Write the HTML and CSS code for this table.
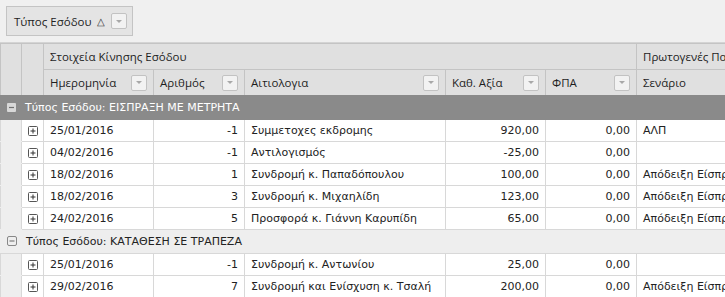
FILE: index.html
```html
<!DOCTYPE html>
<html>
<head>
<meta charset="utf-8">
<link rel="stylesheet" href="styles.css">
</head>
<body>
<div class="grouppanel">
  <div class="groupbtn"><span>Τύπος Εσόδου</span><span class="sort">&#9651;</span><span class="fbtn"><svg width="8" height="5" viewBox="0 0 8 5"><path d="M1 1h6L4 4z" fill="#a8a8a8"/></svg></span></div>
</div>
<table class="grid">
  <colgroup>
    <col class="c-ind"><col class="c-exp"><col class="c-date"><col class="c-num"><col class="c-desc"><col class="c-val"><col class="c-vat"><col class="c-scn">
  </colgroup>
  <thead>
    <tr class="band">
      <th class="ind" rowspan="2"></th>
      <th class="exp" rowspan="2"></th>
      <th colspan="5">Στοιχεία Κίνησης Εσόδου</th>
      <th>Πρωτογενές Παραστατικό</th>
    </tr>
    <tr class="cols">
      <th><div class="hc"><span>Ημερομηνία</span><span class="fbtn"><svg width="8" height="5" viewBox="0 0 8 5"><path d="M1 1h6L4 4z" fill="#a8a8a8"/></svg></span></div></th>
      <th><div class="hc"><span>Αριθμός</span><span class="fbtn"><svg width="8" height="5" viewBox="0 0 8 5"><path d="M1 1h6L4 4z" fill="#a8a8a8"/></svg></span></div></th>
      <th><div class="hc"><span>Αιτιολογια</span><span class="fbtn"><svg width="8" height="5" viewBox="0 0 8 5"><path d="M1 1h6L4 4z" fill="#a8a8a8"/></svg></span></div></th>
      <th><div class="hc"><span>Καθ. Αξία</span><span class="fbtn"><svg width="8" height="5" viewBox="0 0 8 5"><path d="M1 1h6L4 4z" fill="#a8a8a8"/></svg></span></div></th>
      <th><div class="hc"><span>ΦΠΑ</span><span class="fbtn"><svg width="8" height="5" viewBox="0 0 8 5"><path d="M1 1h6L4 4z" fill="#a8a8a8"/></svg></span></div></th>
      <th><div class="hc"><span>Σενάριο</span></div></th>
    </tr>
  </thead>
  <tbody>
    <tr class="grp grp-sel">
      <td colspan="8"><span class="gicon"><svg width="9" height="9" viewBox="0 0 9 9"><rect x="0" y="0" width="9" height="9" rx="1" fill="#d8d8d8"/><path d="M2 4.5h5" stroke="#707070" stroke-width="1.2"/></svg></span>Τύπος Εσόδου: ΕΙΣΠΡΑΞΗ ΜΕ ΜΕΤΡΗΤΑ</td>
    </tr>
    <tr class="row"><td class="ind"></td><td class="exp"><span class="picon"><svg width="10" height="10" viewBox="0 0 10 10"><rect x="0.5" y="0.5" width="9" height="9" rx="1" fill="#fff" stroke="#555"/><path d="M2.5 5h5M5 2.5v5" stroke="#333" stroke-width="1"/></svg></span></td><td>25/01/2016</td><td class="r">-1</td><td>Συμμετοχες εκδρομης</td><td class="r">920,00</td><td class="r">0,00</td><td>ΑΛΠ</td></tr>
    <tr class="row"><td class="ind"></td><td class="exp"><span class="picon"><svg width="10" height="10" viewBox="0 0 10 10"><rect x="0.5" y="0.5" width="9" height="9" rx="1" fill="#fff" stroke="#555"/><path d="M2.5 5h5M5 2.5v5" stroke="#333" stroke-width="1"/></svg></span></td><td>04/02/2016</td><td class="r">-1</td><td>Αντιλογισμός</td><td class="r">-25,00</td><td class="r">0,00</td><td></td></tr>
    <tr class="row"><td class="ind"></td><td class="exp"><span class="picon"><svg width="10" height="10" viewBox="0 0 10 10"><rect x="0.5" y="0.5" width="9" height="9" rx="1" fill="#fff" stroke="#555"/><path d="M2.5 5h5M5 2.5v5" stroke="#333" stroke-width="1"/></svg></span></td><td>18/02/2016</td><td class="r">1</td><td>Συνδρομή κ. Παπαδόπουλου</td><td class="r">100,00</td><td class="r">0,00</td><td>Απόδειξη Είσπραξης</td></tr>
    <tr class="row"><td class="ind"></td><td class="exp"><span class="picon"><svg width="10" height="10" viewBox="0 0 10 10"><rect x="0.5" y="0.5" width="9" height="9" rx="1" fill="#fff" stroke="#555"/><path d="M2.5 5h5M5 2.5v5" stroke="#333" stroke-width="1"/></svg></span></td><td>18/02/2016</td><td class="r">3</td><td>Συνδρομή κ. Μιχαηλίδη</td><td class="r">123,00</td><td class="r">0,00</td><td>Απόδειξη Είσπραξης</td></tr>
    <tr class="row"><td class="ind"></td><td class="exp"><span class="picon"><svg width="10" height="10" viewBox="0 0 10 10"><rect x="0.5" y="0.5" width="9" height="9" rx="1" fill="#fff" stroke="#555"/><path d="M2.5 5h5M5 2.5v5" stroke="#333" stroke-width="1"/></svg></span></td><td>24/02/2016</td><td class="r">5</td><td>Προσφορά κ. Γιάννη Καρυπίδη</td><td class="r">65,00</td><td class="r">0,00</td><td>Απόδειξη Είσπραξης</td></tr>
    <tr class="grp">
      <td colspan="8"><span class="gicon"><svg width="10" height="10" viewBox="0 0 10 10"><rect x="0.5" y="0.5" width="9" height="9" rx="1.5" fill="none" stroke="#888"/><path d="M2.5 5h5" stroke="#666" stroke-width="1"/></svg></span>Τύπος Εσόδου: ΚΑΤΑΘΕΣΗ ΣΕ ΤΡΑΠΕΖΑ</td>
    </tr>
    <tr class="row"><td class="ind"></td><td class="exp"><span class="picon"><svg width="10" height="10" viewBox="0 0 10 10"><rect x="0.5" y="0.5" width="9" height="9" rx="1" fill="#fff" stroke="#555"/><path d="M2.5 5h5M5 2.5v5" stroke="#333" stroke-width="1"/></svg></span></td><td>25/01/2016</td><td class="r">-1</td><td>Συνδρομή κ. Αντωνίου</td><td class="r">25,00</td><td class="r">0,00</td><td></td></tr>
    <tr class="row"><td class="ind"></td><td class="exp"><span class="picon"><svg width="10" height="10" viewBox="0 0 10 10"><rect x="0.5" y="0.5" width="9" height="9" rx="1" fill="#fff" stroke="#555"/><path d="M2.5 5h5M5 2.5v5" stroke="#333" stroke-width="1"/></svg></span></td><td>29/02/2016</td><td class="r">7</td><td>Συνδρομή και Ενίσχυση κ. Τσαλή</td><td class="r">200,00</td><td class="r">0,00</td><td>Απόδειξη Είσπραξης</td></tr>
  </tbody>
</table>
</body>
</html>
```
FILE: styles.css
```css
html, body {
  margin: 0;
  padding: 0;
  width: 725px;
  height: 297px;
  overflow: hidden;
  background: #fff;
}
body {
  font-family: "DejaVu Sans", Verdana, sans-serif;
  color: #1e1e1e;
}
.grouppanel {
  background: #f0f0f0;
  height: 43px;
  box-sizing: border-box;
  padding: 6px 0 0 6px;
  border-bottom: 1px solid #d4d4d4;
}
.groupbtn {
  display: inline-flex;
  align-items: center;
  height: 30px;
  box-sizing: border-box;
  padding: 0 5px 0 7px;
  border: 1px solid #c4c4c4;
  background: #e4e4e4;
  font-family: "Open Sans", "Noto Sans", sans-serif;
  font-size: 11.5px;
  color: #222;
}
.groupbtn .sort {
  font-size: 10px;
  margin: 0 6px 0 6px;
  color: #333;
}
.fbtn {
  display: inline-flex;
  align-items: center;
  justify-content: center;
  width: 14px;
  height: 14px;
  border: 1px solid #c2c2c2;
  border-radius: 2px;
  background: #f2f2f2;
  flex: none;
}
.grid {
  border-collapse: collapse;
  table-layout: fixed;
  width: 830px;
}
.c-ind { width: 21px; }
.c-exp { width: 22px; }
.c-date { width: 110px; }
.c-num { width: 91px; }
.c-desc { width: 201px; }
.c-val { width: 100px; }
.c-vat { width: 91px; }
.c-scn { width: 194px; }
thead th {
  background: #e0e0e0;
  border: 1px solid #c4c4c4;
  font-family: "Open Sans", "Noto Sans", sans-serif;
  font-weight: normal;
  font-size: 11.5px;
  color: #1e1e1e;
  text-align: left;
  padding: 0 6px;
  white-space: nowrap;
  overflow: hidden;
}
thead tr.band th { height: 25px; }
thead tr.cols th { height: 25px; border-bottom: 1px solid #8a8a8a; }
thead th.ind, thead th.exp { border-bottom: 1px solid #8a8a8a; }
thead tr:first-child th { border-top: 1px solid #c4c4c4; }
.hc {
  display: flex;
  align-items: center;
  justify-content: space-between;
}
tbody td {
  height: 21px;
  padding: 0 6px;
  font-size: 11px;
  border: 1px solid #d8d8d8;
  white-space: nowrap;
  overflow: hidden;
  color: #222;
}
tbody td.r { text-align: right; padding-right: 6px; }
tbody td.ind {
  background: #eeeeee;
  border-top-color: #eeeeee;
  border-bottom-color: #eeeeee;
  padding: 0;
}
tbody td.exp { padding: 0 0 0 6px; }
.picon, .gicon { display: inline-flex; vertical-align: middle; }
.picon svg { display: block; }
.gicon { margin-right: 9px; position: relative; top: -1px; }
.grp td {
  height: 23px;
  background: #eeeeee;
  border: 1px solid #eeeeee;
  border-bottom-color: #d8d8d8;
  padding-left: 6px;
  font-size: 11px;
  color: #222;
}
.grp-sel td {
  background: #8a8a8a;
  border-color: #8a8a8a;
  color: #fff;
}
```
